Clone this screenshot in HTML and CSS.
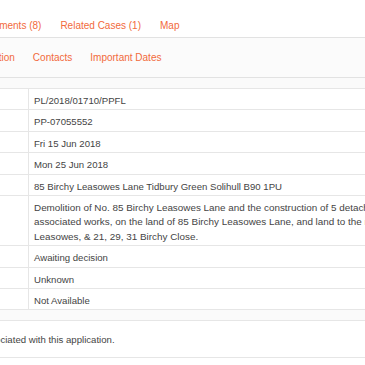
FILE: index.html
```html
<!DOCTYPE html>
<html lang="en">
<head>
<meta charset="utf-8">
<title>Application Summary</title>
<link rel="stylesheet" href="styles.css">
</head>
<body>
<div class="page">
  <ul class="tabs">
    <li><a href="#">Summary</a></li>
    <li><a href="#">Details</a></li>
    <li><a href="#">Comments (0)</a></li>
    <li><a href="#">Constraints (0)</a></li>
    <li><a href="#">Documents (8)</a></li>
    <li><a href="#">Related Cases (1)</a></li>
    <li><a href="#">Map</a></li>
  </ul>
  <div class="panel">
    <ul class="subtabs">
      <li><a href="#">Summary</a></li>
      <li><a href="#">Further Information</a></li>
      <li><a href="#">Contacts</a></li>
      <li><a href="#">Important Dates</a></li>
    </ul>
    <div class="tabcontent">
      <table class="details">
        <tr><th>Reference</th><td>PL/2018/01710/PPFL</td></tr>
        <tr><th>Alternative Reference</th><td>PP-07055552</td></tr>
        <tr><th>Application Received</th><td>Fri 15 Jun 2018</td></tr>
        <tr><th>Application Validated</th><td>Mon 25 Jun 2018</td></tr>
        <tr><th>Address</th><td>85 Birchy Leasowes Lane Tidbury Green Solihull B90 1PU</td></tr>
        <tr><th>Proposal</th><td class="proposal">Demolition of No. 85 Birchy Leasowes Lane and the construction of 5 detached dwellings with associated works, on the land of 85 Birchy Leasowes Lane, and land to the rear of 73-83 Birchy Leasowes, &amp; 21, 29, 31 Birchy Close.</td></tr>
        <tr><th>Status</th><td>Awaiting decision</td></tr>
        <tr><th>Appeal Status</th><td>Unknown</td></tr>
        <tr><th>Appeal Decision</th><td>Not Available</td></tr>
      </table>
      <p class="note">There is 1 property associated with this application.</p>
    </div>
  </div>
</div>
</body>
</html>
```
FILE: styles.css
```css
html, body {margin:0; overflow:hidden; background:#fff;}
body {font-family:"Liberation Sans", Arial, sans-serif; color:#444;}

.page {margin-left:-360px; width:1000px;}

.tabs {list-style:none; margin:0; padding:20px 0 5px 48px; display:flex; border-bottom:1px solid #e2e2e2;}
.tabs a {display:block; padding:0 9.5px; font-size:10px; line-height:12px; color:#f26a3c; text-decoration:none;}

.panel {background:#fafafa;}
.subtabs {list-style:none; margin:0; padding:14px 0 13px 220px; display:flex; background:#fbfbfb; border-bottom:1px solid #e2e2e2;}
.subtabs a {display:block; padding:0 9px; font-size:10px; line-height:12px; color:#f26a3c; text-decoration:none;}

.tabcontent {padding:10px 0 0 200px;}

.details {border-collapse:collapse; table-layout:fixed; width:640px; background:#fff; font-size:9.6px; line-height:14.4px;}
.details th, .details td {padding:5px 5px 1px; border-top:1px solid #e6e6e6; border-bottom:1px solid #e6e6e6; text-align:left; vertical-align:top;}
.details th {width:178px; font-weight:bold; border-right:1px solid #e6e6e6;}
.details .proposal {font-size:9.9px;}

.note {margin:10px 0 0; padding:11px 0 10px 57px; background:#fff; border-top:1px solid #e6e6e6; border-bottom:1px solid #e6e6e6; font-size:9.6px; line-height:15px;}
```
